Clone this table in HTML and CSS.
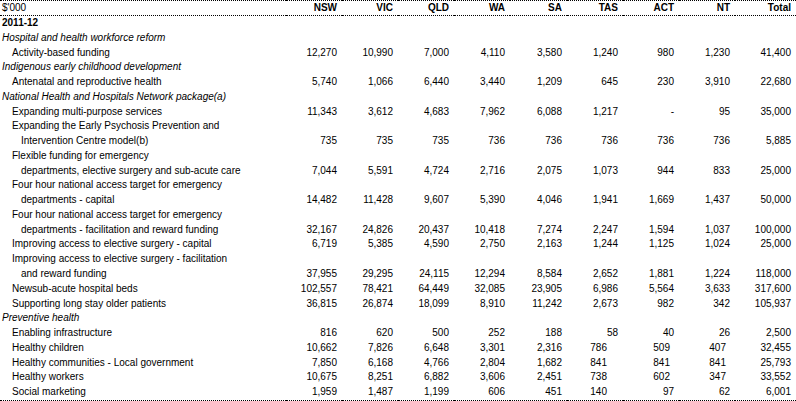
FILE: index.html
```html
<!DOCTYPE html>
<html lang="en">
<head>
<meta charset="utf-8">
<title>Health payments 2011-12</title>
<link rel="stylesheet" href="styles.css">
</head>
<body>
<table class="tbl">
  <colgroup>
    <col class="c-label">
    <col class="c-num"><col class="c-num"><col class="c-num"><col class="c-num">
    <col class="c-sa"><col class="c-num"><col class="c-num"><col class="c-num">
    <col class="c-total">
  </colgroup>
  <thead>
    <tr class="head">
      <th class="lbl">$'000</th>
      <th>NSW</th><th>VIC</th><th>QLD</th><th>WA</th><th>SA</th><th>TAS</th><th>ACT</th><th>NT</th><th>Total</th>
    </tr>
  </thead>
  <tbody>
    <tr><td class="lbl year" colspan="10">2011-12</td></tr>
    <tr><td class="lbl cat" colspan="10">Hospital and health workforce reform</td></tr>
    <tr><td class="lbl item">Activity-based funding</td><td>12,270</td><td>10,990</td><td>7,000</td><td>4,110</td><td>3,580</td><td>1,240</td><td>980</td><td>1,230</td><td>41,400</td></tr>
    <tr><td class="lbl cat" colspan="10">Indigenous early childhood development</td></tr>
    <tr><td class="lbl item">Antenatal and reproductive health</td><td>5,740</td><td>1,066</td><td>6,440</td><td>3,440</td><td>1,209</td><td>645</td><td>230</td><td>3,910</td><td>22,680</td></tr>
    <tr><td class="lbl cat" colspan="10">National Health and Hospitals Network package(a)</td></tr>
    <tr><td class="lbl item">Expanding multi-purpose services</td><td>11,343</td><td>3,612</td><td>4,683</td><td>7,962</td><td>6,088</td><td>1,217</td><td>-</td><td>95</td><td>35,000</td></tr>
    <tr><td class="lbl item"><span class="ln">Expanding the Early Psychosis Prevention and</span><span class="ln cont">Intervention Centre model(b)</span></td><td>735</td><td>735</td><td>735</td><td>736</td><td>736</td><td>736</td><td>736</td><td>736</td><td>5,885</td></tr>
    <tr><td class="lbl item"><span class="ln">Flexible funding for emergency</span><span class="ln cont">departments, elective surgery and sub-acute care</span></td><td>7,044</td><td>5,591</td><td>4,724</td><td>2,716</td><td>2,075</td><td>1,073</td><td>944</td><td>833</td><td>25,000</td></tr>
    <tr><td class="lbl item"><span class="ln">Four hour national access target for emergency</span><span class="ln cont">departments - capital</span></td><td>14,482</td><td>11,428</td><td>9,607</td><td>5,390</td><td>4,046</td><td>1,941</td><td>1,669</td><td>1,437</td><td>50,000</td></tr>
    <tr><td class="lbl item"><span class="ln">Four hour national access target for emergency</span><span class="ln cont">departments - facilitation and reward funding</span></td><td>32,167</td><td>24,826</td><td>20,437</td><td>10,418</td><td>7,274</td><td>2,247</td><td>1,594</td><td>1,037</td><td>100,000</td></tr>
    <tr><td class="lbl item">Improving access to elective surgery - capital</td><td>6,719</td><td>5,385</td><td>4,590</td><td>2,750</td><td>2,163</td><td>1,244</td><td>1,125</td><td>1,024</td><td>25,000</td></tr>
    <tr><td class="lbl item"><span class="ln">Improving access to elective surgery - facilitation</span><span class="ln cont">and reward funding</span></td><td>37,955</td><td>29,295</td><td>24,115</td><td>12,294</td><td>8,584</td><td>2,652</td><td>1,881</td><td>1,224</td><td>118,000</td></tr>
    <tr><td class="lbl item">Newsub-acute hospital beds</td><td>102,557</td><td>78,421</td><td>64,449</td><td>32,085</td><td>23,905</td><td>6,986</td><td>5,564</td><td>3,633</td><td>317,600</td></tr>
    <tr><td class="lbl item">Supporting long stay older patients</td><td>36,815</td><td>26,874</td><td>18,099</td><td>8,910</td><td>11,242</td><td>2,673</td><td>982</td><td>342</td><td>105,937</td></tr>
    <tr><td class="lbl cat" colspan="10">Preventive health</td></tr>
    <tr><td class="lbl item">Enabling infrastructure</td><td>816</td><td>620</td><td>500</td><td>252</td><td>188</td><td>58</td><td>40</td><td>26</td><td>2,500</td></tr>
    <tr><td class="lbl item">Healthy children</td><td>10,662</td><td>7,826</td><td>6,648</td><td>3,301</td><td>2,316</td><td class="sh-l">786</td><td class="sh-s">509</td><td class="sh-s">407</td><td>32,455</td></tr>
    <tr><td class="lbl item">Healthy communities - Local government</td><td>7,850</td><td>6,168</td><td>4,766</td><td>2,804</td><td>1,682</td><td class="sh-l">841</td><td class="sh-s">841</td><td class="sh-s">841</td><td>25,793</td></tr>
    <tr><td class="lbl item">Healthy workers</td><td>10,675</td><td>8,251</td><td>6,882</td><td>3,606</td><td>2,451</td><td class="sh-l">738</td><td class="sh-s">602</td><td class="sh-s">347</td><td>33,552</td></tr>
    <tr class="last"><td class="lbl item">Social marketing</td><td>1,959</td><td>1,487</td><td>1,199</td><td>606</td><td>451</td><td class="sh-l">140</td><td>97</td><td>62</td><td>6,001</td></tr>
  </tbody>
</table>
</body>
</html>
```
FILE: styles.css
```css
html, body {
  margin: 0;
  padding: 0;
  background: #ffffff;
}

.tbl {
  width: 796px;
  table-layout: fixed;
  border-collapse: collapse;
  font-family: "Liberation Sans", Arial, sans-serif;
  font-size: 10px;
  line-height: 14.76px;
  color: #000000;
}

.c-label { width: 286px; }
.c-num { width: 56px; }
.c-sa { width: 57px; }
.c-total { width: 61px; }

.tbl th,
.tbl td {
  padding: 0 5px 0 0;
  text-align: right;
  vertical-align: bottom;
  white-space: nowrap;
}

.head th {
  border-top: 1px dotted #000000;
  border-bottom: 1px dotted #000000;
  height: 14px;
  line-height: 14px;
  font-weight: bold;
}

.head th.lbl {
  font-weight: normal;
}

.tbl .lbl {
  text-align: left;
  padding-left: 2px;
}

.tbl .year {
  font-weight: bold;
}

.tbl .cat {
  font-style: italic;
}

.tbl .item {
  padding-left: 12px;
}

.ln {
  display: block;
}

.ln.cont {
  padding-left: 9px;
}

.tbl td.sh-l {
  padding-right: 16px;
}

.tbl td.sh-s {
  padding-right: 9px;
}

.last td {
  border-bottom: 1px dotted #000000;
}
```
